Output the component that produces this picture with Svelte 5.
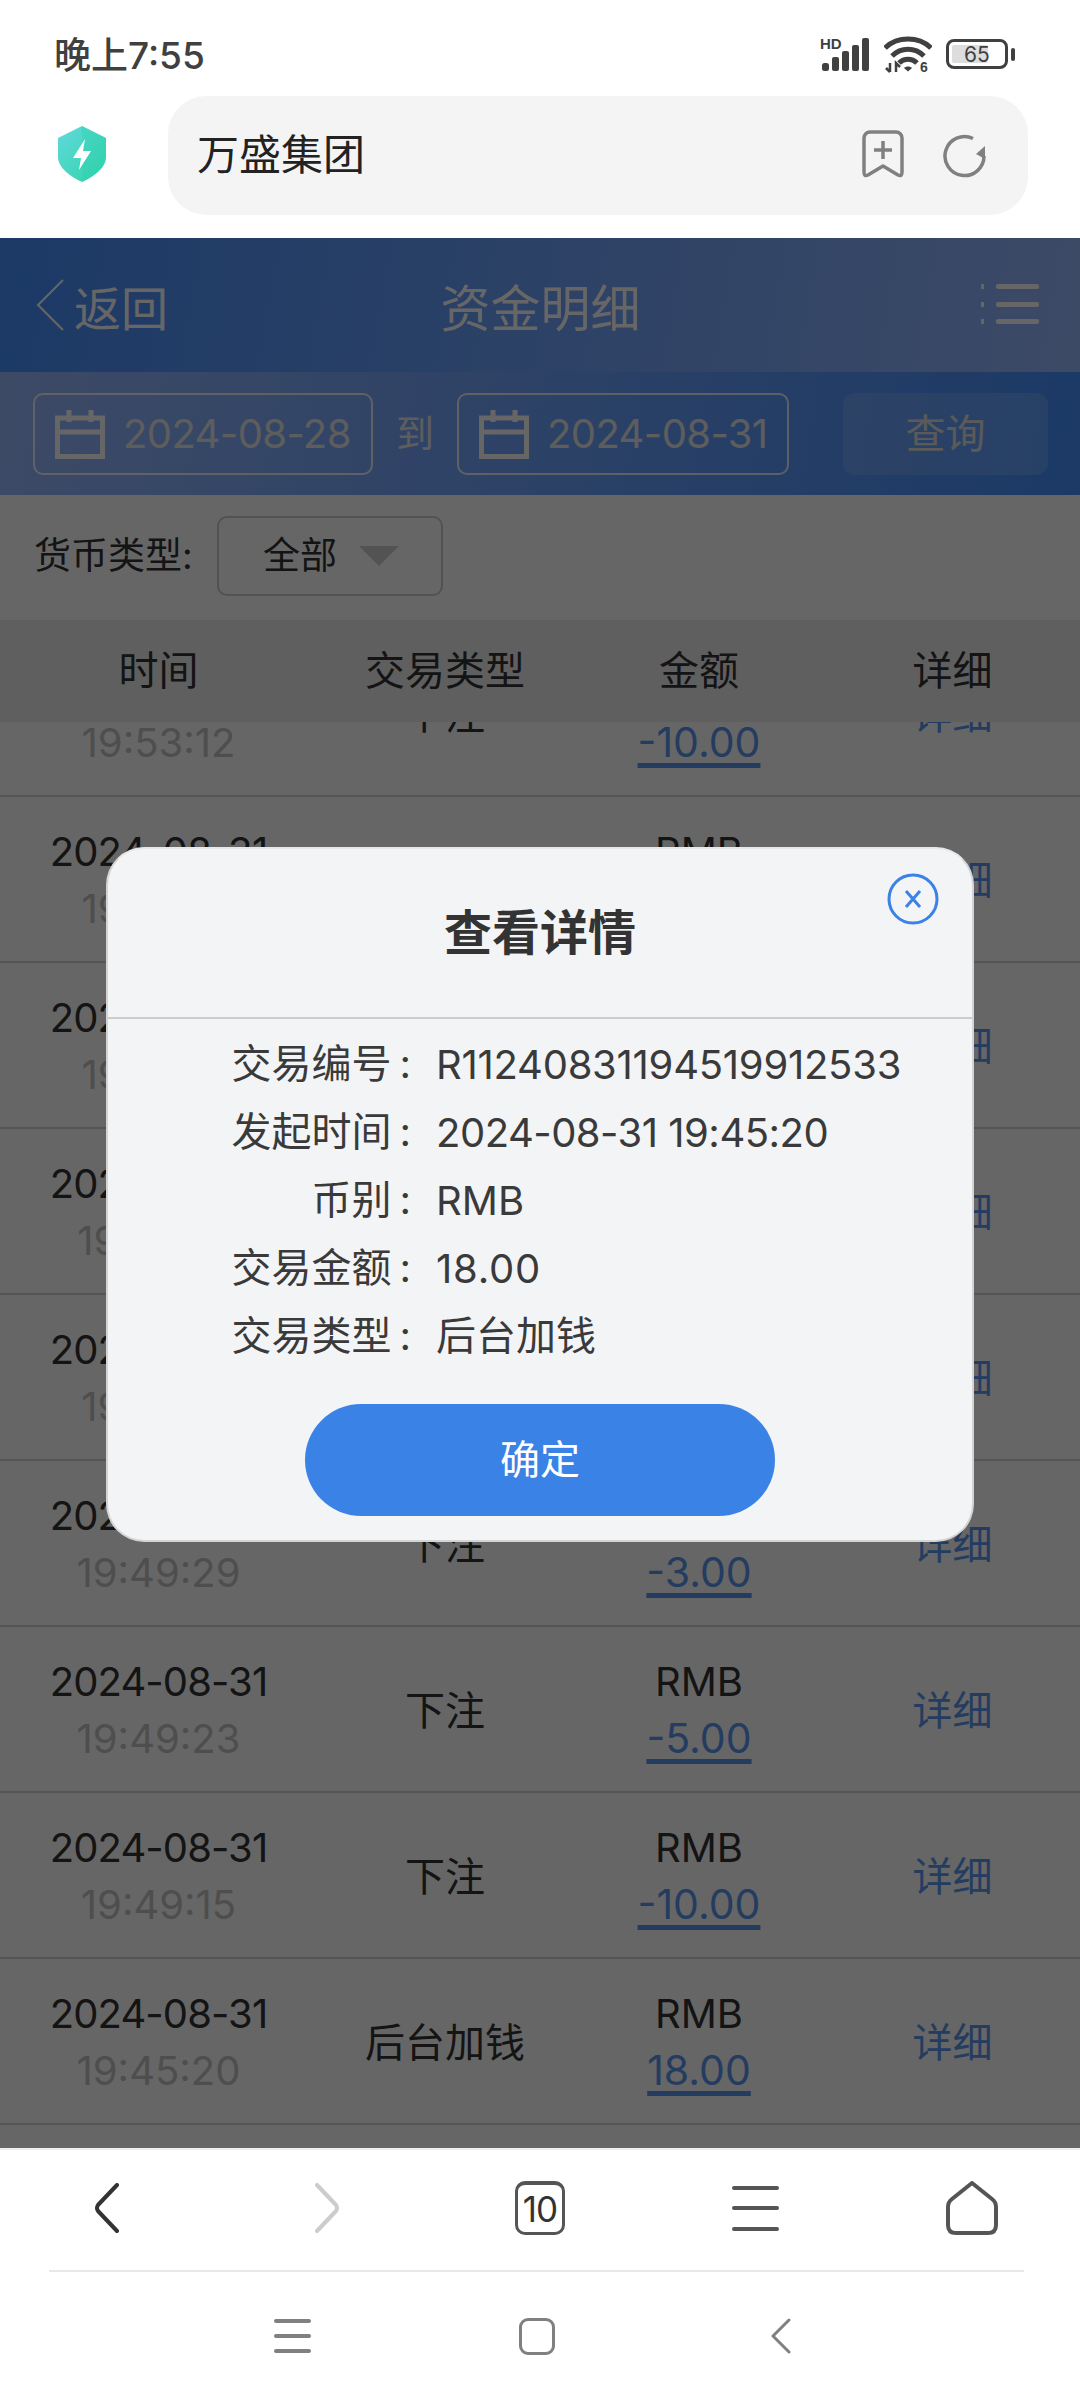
<script>
  const rows = [
    { time: '19:53:12', type: '下注', amount: '-10.00' },
    { time: '19:52:41', type: '下注', amount: '-5.00' },
    { time: '19:51:36', type: '下注', amount: '-10.00' },
    { time: '19:50:58', type: '下注', amount: '-5.00' },
    { time: '19:50:12', type: '下注', amount: '-3.00' },
    { time: '19:49:29', type: '下注', amount: '-3.00' },
    { time: '19:49:23', type: '下注', amount: '-5.00' },
    { time: '19:49:15', type: '下注', amount: '-10.00' },
    { time: '19:45:20', type: '后台加钱', amount: '18.00' }
  ];
  const details = [
    { k: '交易编号', v: 'R11240831194519912533', fit: 'tight' },
    { k: '发起时间', v: '2024-08-31 19:45:20', fit: 'tighter' },
    { k: '币别', v: 'RMB', fit: '' },
    { k: '交易金额', v: '18.00', fit: 'loose' },
    { k: '交易类型', v: '后台加钱', fit: 'cjk' }
  ];
</script>

<div class="phone">
  <div class="status">
    <span class="clock">晚上7:55</span>
    <div class="status-icons">
      <svg width="50" height="36" viewBox="0 0 50 36">
        <text x="0" y="13" class="hd">HD</text>
        <g fill="#404040">
          <rect x="2" y="27" width="7" height="8" rx="2.5" />
          <rect x="12" y="21" width="7" height="14" rx="2" />
          <rect x="22" y="15" width="7" height="20" rx="2" />
          <rect x="32" y="9" width="7" height="26" rx="2" />
          <rect x="42" y="2" width="7" height="33" rx="2" />
        </g>
      </svg>
      <svg width="48" height="38" viewBox="0 0 48 38" fill="none" stroke="#404040" stroke-width="5">
        <path d="M1 13 C13 1 35 1 47 13" />
        <path d="M8 21 C17 12 31 12 40 21" />
        <path d="M15 28 C20 23 28 23 33 28" />
        <path d="M20 33 L24 36.5 L28 33 C26 31 22 31 20 33Z" fill="#404040" stroke="none" />
        <text x="36" y="37" class="six">6</text>
        <path d="M6 28 v9 M2 33 l4 4 M12 37 v-9 l4 4" stroke-width="2.5" />
      </svg>
      <div class="battery">
        <div class="cell">
          <span class="fill"></span>
          <span class="pct">65</span>
        </div>
        <span class="nub"></span>
      </div>
    </div>
  </div>

  <div class="address">
    <svg class="shield" width="50" height="56" viewBox="0 0 50 56">
      <defs>
        <linearGradient id="sg" x1="0" y1="0" x2="1" y2="1">
          <stop offset="0" stop-color="#62d9dc" />
          <stop offset="1" stop-color="#2fd3a8" />
        </linearGradient>
      </defs>
      <path d="M25 0 L49 12 V31 C49 42 36 51 25 56 C14 51 1 42 1 31 V12 Z" fill="url(#sg)" />
      <path d="M25 0 L49 12 V31 C49 42 36 51 25 56Z" fill="#2dd0b0" opacity=".35" />
      <path d="M28 13 L16 32 H24 L22 44 L34 25 H26 Z" fill="#fff" />
    </svg>
    <div class="url-box">
      <span class="url">万盛集团</span>
      <svg class="mark" width="42" height="48" viewBox="0 0 42 48" fill="none" stroke="#808080" stroke-width="3.5">
        <path d="M2 8 a6 6 0 0 1 6 -6 h26 a6 6 0 0 1 6 6 v34 q0 5 -4 3 l-15 -9 l-15 9 q-4 2 -4 -3 Z" stroke-linejoin="round" />
        <path d="M12 20 h18 M21 11 v18" />
      </svg>
      <svg width="44" height="44" viewBox="0 0 44 44" fill="none" stroke="#808080" stroke-width="3.5">
        <path d="M41 22 A19.5 19.5 0 1 1 30 4.5" />
        <path d="M42 14 l0 13 l-9 -5 Z" fill="#808080" stroke="none" transform="translate(0 -2)" />
      </svg>
    </div>
  </div>

  <div class="page">
    <header class="topbar">
      <div class="back">
        <svg width="28" height="52" viewBox="0 0 28 52" fill="none" stroke="#fff" stroke-width="2"><path d="M27 1 L2 26 L27 51" /></svg>
        <span>返回</span>
      </div>
      <h1>资金明细</h1>
      <svg class="menu" width="58" height="42" viewBox="0 0 58 42" fill="#fff">
        <rect x="0" y="0" width="3" height="5" />
        <rect x="15" y="0" width="43" height="5" rx="2" />
        <rect x="0" y="18" width="3" height="5" />
        <rect x="15" y="18" width="43" height="5" rx="2" />
        <rect x="0" y="35" width="3" height="5" />
        <rect x="15" y="35" width="43" height="5" rx="2" />
      </svg>
    </header>

    <div class="filter">
      <div class="date first">
        {@render calendar()}
        <span>2024-08-28</span>
      </div>
      <span class="to">到</span>
      <div class="date second">
        {@render calendar()}
        <span>2024-08-31</span>
      </div>
      <button class="query">查询</button>
    </div>

    <div class="currency">
      <span class="label">货币类型:</span>
      <div class="select">
        <span>全部</span>
        <i class="tri"></i>
      </div>
    </div>

    <div class="thead grid">
      <span>时间</span><span>交易类型</span><span>金额</span><span>详细</span>
    </div>

    <div class="list">
      <div class="rows">
        {#each rows as r}
          <div class="row grid">
            <div class="stack">
              <span class="day">2024-08-31</span>
              <span class="time">{r.time}</span>
            </div>
            <span class="up">{r.type}</span>
            <div class="stack">
              <span>RMB</span>
              <a class="amount" href="#top">{r.amount}</a>
            </div>
            <a class="more up" href="#top">详细</a>
          </div>
        {/each}
      </div>
    </div>

    <div class="overlay">
      <div class="modal">
        <div class="modal-head">查看详情</div>
        <svg class="close" width="52" height="52" viewBox="0 0 52 52" fill="none" stroke="#3b82e6" stroke-width="3">
          <circle cx="26" cy="26" r="24" />
          <path d="M19 18 L33 34 M33 18 L19 34" />
        </svg>
        <div class="modal-body">
          {#each details as d}
            <div class="detail">
              <span class="k">{d.k}<span class="colon">:</span></span>
              <span class="v {d.fit}">{d.v}</span>
            </div>
          {/each}
        </div>
        <button class="ok">确定</button>
      </div>
    </div>
  </div>

  <div class="browser-nav">
    <div class="nav-row">
      <svg class="prev" width="26" height="50" viewBox="0 0 26 50" fill="none" stroke="#333" stroke-width="4" stroke-linecap="round" stroke-linejoin="round"><path d="M24 2 L5 22 Q3 25 5 28 L24 48" /></svg>
      <svg class="next" width="26" height="50" viewBox="0 0 26 50" fill="none" stroke="#ccc" stroke-width="4" stroke-linecap="round" stroke-linejoin="round"><path d="M2 2 L21 22 Q23 25 21 28 L2 48" /></svg>
      <div class="tabs">10</div>
      <div class="lines big"><i></i><i></i><i></i></div>
      <svg width="52" height="54" viewBox="0 0 52 54" fill="none" stroke="#555" stroke-width="4" stroke-linejoin="round"><path d="M26 2 L46 18 Q50 21 50 26 V44 Q50 52 42 52 H10 Q2 52 2 44 V26 Q2 21 6 18 Z" /></svg>
    </div>
    <div class="sys-row">
      <div class="lines small"><i></i><i></i><i></i></div>
      <div class="square"></div>
      <svg width="20" height="36" viewBox="0 0 20 36" fill="none" stroke="#808080" stroke-width="3" stroke-linecap="round" stroke-linejoin="round"><path d="M18 2 L2 18 L18 34" /></svg>
    </div>
  </div>
</div>

{#snippet calendar()}
  <svg class="cal" width="50" height="50" viewBox="0 0 50 50" fill="none" stroke="#fff" stroke-width="5">
    <rect x="2.5" y="9" width="45" height="38.5" />
    <path d="M2 23 H48" />
    <path d="M14 1 V13 M36 1 V13" />
  </svg>
{/snippet}

<style>
  :global(body) {
    margin: 0;
    background: #fff;
  }
  .phone {
    width: 1080px;
    height: 2400px;
    display: flex;
    flex-direction: column;
    overflow: hidden;
    font-family: Inter, "Noto Sans CJK SC", sans-serif;
    color: #333;
    background: #fff;
  }
  .status {
    height: 96px;
    flex: none;
    display: flex;
    align-items: center;
    justify-content: space-between;
    padding: 18px 65px 6px 54px;
    box-sizing: border-box;
  }
  .clock {
    font-size: 37px;
    font-weight: 500;
    color: #404040;
    margin-top: -2px;
  }
  .status-icons {
    display: flex;
    align-items: center;
    gap: 14px;
  }
  .hd {
    font: 700 15px "Liberation Sans", sans-serif;
    fill: #404040;
  }
  .six {
    font: 700 14px "Liberation Sans", sans-serif;
    fill: #404040;
    stroke: none;
  }
  .battery {
    display: flex;
    align-items: center;
    gap: 3px;
  }
  .cell {
    width: 62px;
    height: 30px;
    box-sizing: border-box;
    border: 3px solid #404040;
    border-radius: 8px;
    position: relative;
    display: flex;
    align-items: center;
    justify-content: center;
  }
  .fill {
    position: absolute;
    left: 3px;
    top: 3px;
    bottom: 3px;
    width: 36px;
    background: #ddd;
    border-radius: 2px;
  }
  .pct {
    position: relative;
    font-size: 21px;
    line-height: 1;
    color: #404040;
  }
  .nub {
    width: 4px;
    height: 13px;
    background: #404040;
    border-radius: 2px;
  }
  .address {
    height: 142px;
    flex: none;
    display: flex;
    align-items: flex-start;
    padding-right: 52px;
    box-sizing: border-box;
  }
  .shield {
    flex: none;
    margin: 30px 0 0 57px;
  }
  .url-box {
    margin-left: 61px;
    flex: 1;
    height: 119px;
    border-radius: 38px;
    background: #f4f4f4;
    display: flex;
    align-items: center;
    padding: 0 41px 0 29px;
    gap: 39px;
  }
  .url {
    flex: 1;
    font-size: 42px;
    color: #222;
    margin-top: -9px;
  }
  .mark {
    margin-top: -3px;
  }
  .page {
    flex: 1;
    min-height: 0;
    position: relative;
    display: flex;
    flex-direction: column;
    background: #fff;
    overflow: hidden;
  }
  .topbar {
    height: 134px;
    flex: none;
    display: flex;
    align-items: center;
    justify-content: space-between;
    padding: 0 41px 0 36px;
    box-sizing: border-box;
    background: linear-gradient(100deg, #4690ff, #98b9ff);
    color: #fff;
  }
  .back {
    width: 300px;
    display: flex;
    align-items: center;
    gap: 10px;
    font-size: 47px;
  }
  .topbar h1 {
    margin: 0;
    font-size: 50px;
    font-weight: 400;
    flex: 1;
    text-align: center;
    padding-right: 236px;
    white-space: nowrap;
  }
  .menu {
    flex: none;
  }
  .filter {
    height: 123px;
    flex: none;
    display: flex;
    align-items: center;
    padding: 0 32px 0 33px;
    box-sizing: border-box;
    background: linear-gradient(100deg, #98b9ff, #4690ff);
    color: #fff;
  }
  .date {
    height: 82px;
    box-sizing: border-box;
    border: 2px solid rgba(255, 255, 255, 0.85);
    border-radius: 10px;
    display: flex;
    align-items: center;
    gap: 18px;
    padding-left: 20px;
    font-size: 40px;
    letter-spacing: -0.6px;
    color: #e8e8e8;
  }
  .first {
    width: 340px;
  }
  .second {
    width: 332px;
  }
  .to {
    width: 84px;
    text-align: center;
    font-size: 38px;
    color: #e8e8e8;
    margin-top: -6px;
  }
  .query {
    margin-left: auto;
    width: 205px;
    height: 82px;
    border: 0;
    padding: 0 0 6px;
    border-radius: 12px;
    background: rgba(255, 255, 255, 0.14);
    font: inherit;
    font-size: 40px;
    color: #e0e0e0;
  }
  .currency {
    height: 125px;
    flex: none;
    display: flex;
    align-items: center;
    padding-left: 34px;
    box-sizing: border-box;
    gap: 22px;
    font-size: 37px;
  }
  .label {
    width: 161px;
    white-space: nowrap;
    margin-top: -9px;
  }
  .select {
    width: 226px;
    height: 80px;
    margin-top: -3px;
    box-sizing: border-box;
    border: 2px solid #ccc;
    border-radius: 10px;
    display: flex;
    align-items: center;
    padding-left: 44px;
    gap: 22px;
  }
  .select span {
    margin-top: -7px;
  }
  .tri {
    width: 0;
    height: 0;
    border-left: 20px solid transparent;
    border-right: 20px solid transparent;
    border-top: 20px solid #d0d0d0;
  }
  .grid {
    display: grid;
    grid-template-columns: 317px 256px 252px 255px;
    align-items: center;
    justify-items: center;
  }
  .thead {
    height: 102px;
    flex: none;
    background: #eee;
    font-size: 40px;
    padding-bottom: 6px;
    box-sizing: border-box;
    position: relative;
    z-index: 1;
  }
  .list {
    flex: 1;
    min-height: 0;
    overflow: hidden;
  }
  .rows {
    margin-top: -91px;
  }
  .row {
    height: 166px;
    box-sizing: border-box;
    border-bottom: 2px solid #d4d4d4;
    font-size: 40px;
  }
  .up {
    margin-top: -3px;
  }
  .stack {
    display: flex;
    flex-direction: column;
    align-items: center;
    line-height: 57px;
    padding-top: 2px;
  }
  .day {
    letter-spacing: -0.9px;
  }
  .time {
    color: #c4c4c4;
  }
  .amount {
    color: #5a96f0;
    font-size: 41px;
    text-decoration: underline;
    text-decoration-thickness: 5px;
    text-underline-offset: 6px;
  }
  .more {
    color: #5a96f0;
    text-decoration: none;
  }
  .overlay {
    position: absolute;
    inset: 0;
    padding-top: 3px;
    background: rgba(0, 0, 0, 0.6);
    display: flex;
    align-items: center;
    justify-content: center;
    z-index: 5;
  }
  .modal {
    position: relative;
    width: 868px;
    height: 695px;
    box-sizing: border-box;
    background: #f3f4f6;
    border: 2px solid #d4d4d4;
    border-top-color: #e8e8e8;
    border-radius: 38px;
    display: flex;
    flex-direction: column;
    align-items: center;
  }
  .modal-head {
    width: 100%;
    height: 170px;
    box-sizing: border-box;
    flex: none;
    border-bottom: 2px solid #ccc;
    padding-bottom: 8px;
    display: flex;
    align-items: center;
    justify-content: center;
    font-size: 48px;
    font-weight: 700;
    color: #333;
  }
  .close {
    position: absolute;
    top: 24px;
    right: 33px;
  }
  .modal-body {
    width: 100%;
    padding-top: 11px;
  }
  .detail {
    height: 68px;
    display: flex;
    align-items: center;
    font-size: 40px;
    color: #3a3a3a;
  }
  .k {
    width: 303px;
    text-align: right;
    flex: none;
    margin-top: -6px;
  }
  .colon {
    margin-left: 8px;
  }
  .v {
    margin-left: 25px;
    white-space: nowrap;
  }
  .v.tight {
    letter-spacing: -0.25px;
  }
  .v.tighter {
    letter-spacing: -0.5px;
  }
  .v.loose {
    letter-spacing: 0.8px;
  }
  .v.cjk {
    margin-top: -6px;
  }
  .ok {
    margin-top: 34px;
    width: 470px;
    height: 112px;
    border: 0;
    padding: 0 0 6px;
    border-radius: 56px;
    background: #3b82e6;
    color: #fff;
    font: inherit;
    font-size: 40px;
  }
  .browser-nav {
    height: 252px;
    flex: none;
    background: #fff;
    border-top: 2px solid #eee;
    box-sizing: border-box;
  }
  .nav-row {
    height: 120px;
    padding-bottom: 4px;
    box-sizing: border-box;
    display: grid;
    grid-template-columns: repeat(5, 216px);
    align-items: center;
    justify-items: center;
  }
  .prev {
    margin-right: 4px;
  }
  .next {
    margin-left: 8px;
  }
  .tabs {
    width: 50px;
    height: 54px;
    box-sizing: border-box;
    border: 3px solid #555;
    border-top-width: 4px;
    border-radius: 10px;
    display: flex;
    align-items: center;
    justify-content: center;
    font-size: 35px;
    letter-spacing: -1px;
    color: #333;
  }
  .lines {
    display: flex;
    flex-direction: column;
    justify-content: space-between;
  }
  .lines i {
    display: block;
    border-radius: 2px;
  }
  .lines.big {
    width: 47px;
    height: 45px;
    margin-right: 2px;
  }
  .lines.big i {
    height: 4px;
    background: #555;
  }
  .lines.small {
    width: 37px;
    height: 34px;
  }
  .lines.small i {
    height: 4px;
    background: #808080;
  }
  .sys-row {
    margin: 0 56px 0 49px;
    height: 130px;
    border-top: 2px solid #e8e8e8;
    box-sizing: border-box;
    display: grid;
    grid-template-columns: 244px 244px 244px;
    align-items: center;
    justify-content: center;
    justify-items: center;
  }
  .square {
    width: 36px;
    height: 37px;
    box-sizing: border-box;
    border: 3.5px solid #808080;
    border-radius: 9px;
  }
</style>
